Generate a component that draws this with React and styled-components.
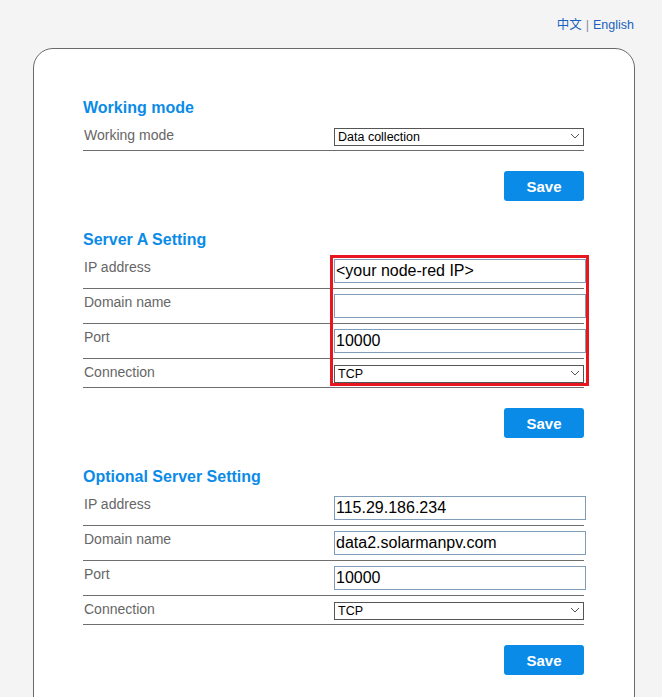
import React from "react";
import styled, { createGlobalStyle } from "styled-components";

const GlobalStyle = createGlobalStyle`
  html, body {
    margin: 0;
    padding: 0;
    background: #f4f4f4;
    font-family: "Liberation Sans", Arial, sans-serif;
  }
`;

const Page = styled.div`
  width: 662px;
  padding-bottom: 40px;
`;

const LangBar = styled.div`
  height: 48px;
  box-sizing: border-box;
  padding: 17px 28px 0 0;
  text-align: right;
  font-size: 12.5px;
  line-height: 16px;
  font-family: "Liberation Sans", "Noto Sans CJK SC", sans-serif;
  color: #7a8fae;

  & a {
    color: #1a62bd;
    text-decoration: none;
  }

  & span {
    margin: 0 4px;
  }
`;

const Card = styled.div`
  box-sizing: border-box;
  width: 602px;
  margin-left: 33px;
  padding: 48px 50px 40px 49px;
  background: #fff;
  border: 1px solid #6a6a6a;
  border-radius: 20px;
  min-height: 700px;
`;

const Section = styled.section`
  width: 501px;
  margin-bottom: 28px;
`;

const Title = styled.h3`
  margin: 0 0 4px;
  padding-top: 1px;
  font-size: 16px;
  line-height: 20px;
  font-weight: bold;
  color: #0a8be8;
`;

const Rows = styled.div`
  position: relative;
`;

const Row = styled.div`
  display: flex;
  align-items: flex-start;
  padding: 5px 0;
  border-bottom: 1px solid #6e6e6e;
`;

const Label = styled.div`
  flex: 0 0 250px;
  padding-left: 1px;
  font-size: 14px;
  line-height: 16px;
  color: #666;
`;

const TextInput = styled.input`
  flex: 0 0 auto;
  box-sizing: border-box;
  width: 252px;
  height: 24px;
  margin: 0;
  padding: 0 1px;
  border: 1px solid #7f9db9;
  font-family: "Liberation Sans", Arial, sans-serif;
  font-size: 16px;
  color: #000;
  background: #fff;
  outline: none;
`;

const SelectWrap = styled.div`
  position: relative;
  flex: 0 0 250px;
  height: 18px;
`;

const Select = styled.select`
  box-sizing: border-box;
  width: 250px;
  height: 18px;
  margin: 0;
  padding: 0 0 0 3px;
  border: 1px solid #555;
  border-radius: 0;
  appearance: none;
  background: #fff;
  font-family: "Liberation Sans", Arial, sans-serif;
  font-size: 12.5px;
  color: #000;
  outline: none;
`;

const Chevron = styled.svg`
  position: absolute;
  right: 4px;
  top: 6px;
  pointer-events: none;
`;

const Highlight = styled.div`
  position: absolute;
  left: 247px;
  top: 1px;
  width: 259px;
  height: 131px;
  box-sizing: border-box;
  border: 3px solid #e8161f;
  pointer-events: none;
`;

const Actions = styled.div`
  display: flex;
  justify-content: flex-end;
  margin-top: 20px;
`;

const SaveButton = styled.button`
  width: 80px;
  height: 30px;
  border: none;
  border-radius: 3px;
  background: #0a8be8;
  color: #fff;
  font-family: "Liberation Sans", Arial, sans-serif;
  font-size: 15px;
  font-weight: bold;
  cursor: pointer;
`;

const Dropdown = ({ value }) => (
  <SelectWrap>
    <Select defaultValue={value}>
      <option>{value}</option>
    </Select>
    <Chevron width="10" height="6" viewBox="0 0 10 6">
      <path d="M1 1 L5 5 L9 1" fill="none" stroke="#555" strokeWidth="1" />
    </Chevron>
  </SelectWrap>
);

const ServerSection = ({ title, ip, domain, port, marked }) => (
  <Section>
    <Title>{title}</Title>
    <Rows>
      <Row>
        <Label>IP address</Label>
        <TextInput defaultValue={ip} />
      </Row>
      <Row>
        <Label>Domain name</Label>
        <TextInput defaultValue={domain} />
      </Row>
      <Row>
        <Label>Port</Label>
        <TextInput defaultValue={port} />
      </Row>
      <Row>
        <Label>Connection</Label>
        <Dropdown value="TCP" />
      </Row>
      {marked && <Highlight />}
    </Rows>
    <Actions>
      <SaveButton>Save</SaveButton>
    </Actions>
  </Section>
);

const App = () => {
  return (
    <Page>
      <GlobalStyle />
      <LangBar>
        <a href="#">中文</a>
        <span>|</span>
        <a href="#">English</a>
      </LangBar>
      <Card>
        <Section>
          <Title>Working mode</Title>
          <Rows>
            <Row>
              <Label>Working mode</Label>
              <Dropdown value="Data collection" />
            </Row>
          </Rows>
          <Actions>
            <SaveButton>Save</SaveButton>
          </Actions>
        </Section>
        <ServerSection
          title="Server A Setting"
          ip="<your node-red IP>"
          domain=""
          port="10000"
          marked
        />
        <ServerSection
          title="Optional Server Setting"
          ip="115.29.186.234"
          domain="data2.solarmanpv.com"
          port="10000"
        />
      </Card>
    </Page>
  );
};

export default App;
